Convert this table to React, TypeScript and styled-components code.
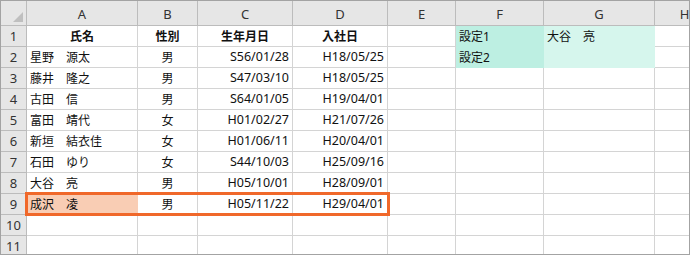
import React from "react"
import styled, { createGlobalStyle } from "styled-components"

const GlobalStyle = createGlobalStyle`
  html, body {
    margin: 0;
    padding: 0;
    background: #ffffff;
  }
  body {
    font-family: "Noto Sans", "Noto Sans CJK JP", sans-serif;
    color: #111;
  }
`

const GRID = "#d4d4d4"
const HEAD_LINE = "#bcbcbc"

const Sheet = styled.div`
  position: relative;
  width: 690px;
  height: 255px;
  box-sizing: border-box;
  border: 1px solid #a3a3a3;
  overflow: hidden;
  display: grid;
  grid-template-columns: 26px 111px 60px 95px 95px 68px 88px 111px 60px;
  grid-auto-rows: 21px;
  grid-template-rows: 25px;
  background: #fff;
`

const Corner = styled.div`
  position: relative;
  background: #e6e6e6;
  border-right: 1px solid ${HEAD_LINE};
  border-bottom: 1px solid ${HEAD_LINE};
  box-sizing: border-box;

  &::after {
    content: "";
    position: absolute;
    right: 3px;
    bottom: 3px;
    width: 0;
    height: 0;
    border-left: 10px solid transparent;
    border-bottom: 10px solid #bfbfbf;
  }
`

const ColHead = styled.div`
  background: #e6e6e6;
  border-right: 1px solid ${HEAD_LINE};
  border-bottom: 1px solid ${HEAD_LINE};
  box-sizing: border-box;
  display: flex;
  align-items: center;
  justify-content: center;
  font-size: 13px;
  color: #333;
  padding-top: 1px;
`

const RowHead = styled.div`
  background: #e6e6e6;
  border-right: 1px solid ${HEAD_LINE};
  border-bottom: 1px solid ${HEAD_LINE};
  box-sizing: border-box;
  display: flex;
  align-items: center;
  justify-content: center;
  font-size: 13px;
  color: #333;
`

type Align = "left" | "center" | "right"

const Cell = styled.div<{ $align?: Align; $fill?: string; $bold?: boolean }>`
  box-sizing: border-box;
  border-right: 1px solid ${(p) => p.$fill || GRID};
  border-bottom: 1px solid ${(p) => p.$fill || GRID};
  background: ${(p) => p.$fill || "transparent"};
  display: flex;
  align-items: center;
  justify-content: ${(p) =>
    p.$align === "right" ? "flex-end" : p.$align === "center" ? "center" : "flex-start"};
  padding: 0 3px 1px;
  font-size: 12px;
  font-weight: ${(p) => (p.$bold ? 700 : 400)};
  white-space: nowrap;
`

const DateText = styled.span`
  font-size: 12.5px;
`

// orange frame around the selected record (row 9, A:D)
const Highlight = styled.div`
  position: absolute;
  left: 24px;
  top: 191px;
  width: 365px;
  height: 24px;
  box-sizing: border-box;
  border: 3px solid #f0682a;
  pointer-events: none;
`

const columns = ["A", "B", "C", "D", "E", "F", "G", "H"]

const staff = [
  ["星野　源太", "男", "S56/01/28", "H18/05/25"],
  ["藤井　隆之", "男", "S47/03/10", "H18/05/25"],
  ["古田　信", "男", "S64/01/05", "H19/04/01"],
  ["富田　靖代", "女", "H01/02/27", "H21/07/26"],
  ["新垣　結衣佳", "女", "H01/06/11", "H20/04/01"],
  ["石田　ゆり", "女", "S44/10/03", "H25/09/16"],
  ["大谷　亮", "男", "H05/10/01", "H28/09/01"],
  ["成沢　凌", "男", "H05/11/22", "H29/04/01"],
]

const SETTING_FILL = "#bdefe2"
const VALUE_FILL = "#d6f6ed"
const PICKED_FILL = "#f9cdb4"

const sideArea: Record<number, [string, string, string, string]> = {
  1: ["設定1", SETTING_FILL, "大谷　亮", VALUE_FILL],
  2: ["設定2", SETTING_FILL, "", VALUE_FILL],
}

const TOTAL_ROWS = 11

export default function App() {
  const rows = []
  for (let r = 1; r <= TOTAL_ROWS; r++) {
    const side = sideArea[r]
    let body: React.ReactNode
    if (r === 1) {
      body = (
        <>
          <Cell $align="center" $bold>氏名</Cell>
          <Cell $align="center" $bold>性別</Cell>
          <Cell $align="center" $bold>生年月日</Cell>
          <Cell $align="center" $bold>入社日</Cell>
        </>
      )
    } else if (staff[r - 2]) {
      const [name, sex, birth, joined] = staff[r - 2]
      body = (
        <>
          <Cell $fill={r === 9 ? PICKED_FILL : undefined}>{name}</Cell>
          <Cell $align="center">{sex}</Cell>
          <Cell $align="right"><DateText>{birth}</DateText></Cell>
          <Cell $align="right"><DateText>{joined}</DateText></Cell>
        </>
      )
    } else {
      body = (
        <>
          <Cell />
          <Cell />
          <Cell />
          <Cell />
        </>
      )
    }
    rows.push(
      <React.Fragment key={r}>
        <RowHead>{r}</RowHead>
        {body}
        <Cell />
        <Cell $fill={side?.[1]}>{side?.[0]}</Cell>
        <Cell $fill={side?.[3]}>{side?.[2]}</Cell>
        <Cell />
      </React.Fragment>
    )
  }

  return (
    <>
      <GlobalStyle />
      <Sheet>
        <Corner />
        {columns.map((c) => (
          <ColHead key={c}>{c}</ColHead>
        ))}
        {rows}
        <Highlight />
      </Sheet>
    </>
  )
}
